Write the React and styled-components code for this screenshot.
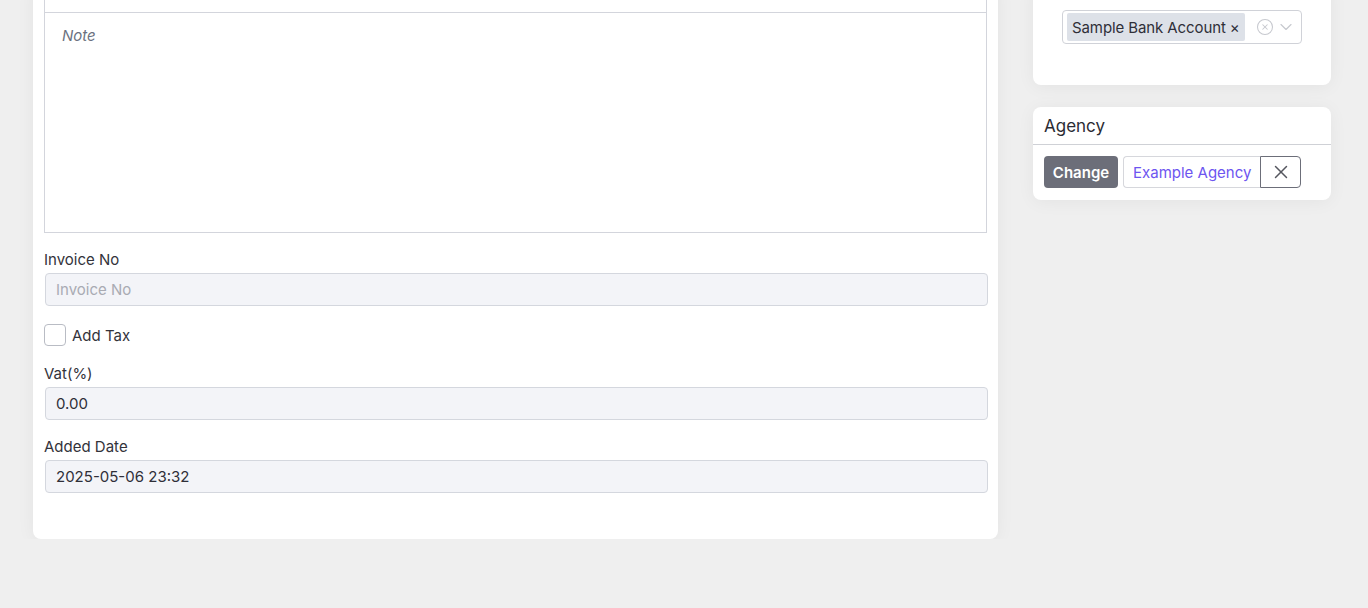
import React from 'react';
import styled, { createGlobalStyle } from 'styled-components';
import { X, CircleX, ChevronDown } from 'lucide-react';

const GlobalStyle = createGlobalStyle`
  body {
    margin: 0;
    background: #efefef;
    font-family: Inter, "Noto Sans", sans-serif;
    color: #2b2b33;
    overflow: hidden;
  }
`;

const Page = styled.div`
  display: flex;
  align-items: flex-start;
  gap: 35px;
  padding-left: 33px;
  margin-top: -20px;
`;

const Card = styled.div`
  background: #fff;
  border-radius: 8px;
  box-shadow: 0 2px 18px rgba(0, 0, 0, 0.05);
`;

const MainCard = styled(Card)`
  width: 965px;
  box-sizing: border-box;
  padding: 11px 10px 46px 11px;
`;

const Editor = styled.div`
  border: 1px solid #d3d5dc;
  width: 943px;
  box-sizing: border-box;
`;

const Toolbar = styled.div`
  height: 20px;
  border-bottom: 1px solid #d3d5dc;
`;

const NoteArea = styled.div`
  height: 219px;
  padding: 13px 17px;
  box-sizing: border-box;
  font-style: italic;
  font-size: 15px;
  color: #6b7280;
`;

const Label = styled.div`
  font-size: 15px;
  line-height: 22px;
  color: #33333b;
  margin-top: ${p => p.$top || 16}px;
  margin-bottom: 2px;
`;

const Input = styled.div`
  height: 33px;
  box-sizing: border-box;
  margin-left: 1px;
  border: 1px solid #d4d7de;
  border-radius: 4px;
  background: #f3f4f8;
  padding: 0 10px;
  display: flex;
  align-items: center;
  font-size: 15px;
  color: ${p => (p.$placeholder ? '#a9abb3' : '#2f2f38')};
`;

const CheckRow = styled.label`
  display: flex;
  align-items: center;
  gap: 6px;
  margin-top: 18px;
  font-size: 15px;
  color: #33333b;
`;

const Box = styled.span`
  width: 22px;
  height: 22px;
  box-sizing: border-box;
  border: 1px solid #b9bcc4;
  border-radius: 4px;
  background: #fff;
`;

const Side = styled.div`
  width: 298px;
  display: flex;
  flex-direction: column;
  gap: 22px;
`;

const BankCard = styled(Card)`
  padding: 30px 29px 41px 29px;
`;

const Select = styled.div`
  height: 34px;
  box-sizing: border-box;
  border: 1px solid #d0d2d8;
  border-radius: 4px;
  display: flex;
  align-items: center;
  padding: 0 4px;
  width: 240px;
`;

const Chip = styled.span`
  height: 28px;
  display: flex;
  align-items: center;
  gap: 4px;
  padding: 0 5px;
  background: #dde1e8;
  border-radius: 2px;
  font-size: 15px;
  letter-spacing: -0.1px;
  color: #2f2f38;
  white-space: nowrap;
`;

const SelectIcons = styled.div`
  margin-left: auto;
  display: flex;
  align-items: center;
  gap: 2px;
  color: #c7c9cf;
  padding-right: 1px;
`;

const Header = styled.div`
  height: 37px;
  border-bottom: 1px solid #cfd1d6;
  padding-left: 11px;
  display: flex;
  align-items: center;
  font-size: 17px;
  color: #2b2b33;
`;

const Body = styled.div`
  display: flex;
  align-items: center;
  padding: 11px 11px 12px 11px;
`;

const ChangeButton = styled.button`
  height: 32px;
  width: 74px;
  border: none;
  border-radius: 4px;
  background: #6c6e79;
  color: #fff;
  font-family: inherit;
  font-weight: 600;
  font-size: 15px;
  margin-right: 5px;
`;

const AgencyName = styled.span`
  height: 32px;
  box-sizing: border-box;
  display: flex;
  align-items: center;
  padding: 0 9px;
  border: 1px solid #d6d7dc;
  border-right: none;
  border-radius: 4px 0 0 4px;
  font-size: 15px;
  color: #6d55f0;
`;

const ClearButton = styled.span`
  height: 32px;
  width: 41px;
  box-sizing: border-box;
  display: flex;
  align-items: center;
  justify-content: center;
  border: 1px solid #6c6e79;
  border-radius: 0 4px 4px 0;
  color: #55565f;
`;

export default function App() {
  return (
    <>
      <GlobalStyle />
      <Page>
        <MainCard>
          <Editor>
            <Toolbar />
            <NoteArea>Note</NoteArea>
          </Editor>
          <Label>Invoice No</Label>
          <Input $placeholder>Invoice No</Input>
          <CheckRow>
            <Box />
            Add Tax
          </CheckRow>
          <Label $top={17}>Vat(%)</Label>
          <Input>0.00</Input>
          <Label>Added Date</Label>
          <Input>2025-05-06 23:32</Input>
        </MainCard>
        <Side>
          <BankCard>
            <Select>
              <Chip>
                Sample Bank Account <span>×</span>
              </Chip>
              <SelectIcons>
                <CircleX size={18} strokeWidth={1.4} />
                <ChevronDown size={20} strokeWidth={1.4} />
              </SelectIcons>
            </Select>
          </BankCard>
          <Card>
            <Header>Agency</Header>
            <Body>
              <ChangeButton>Change</ChangeButton>
              <AgencyName>Example Agency</AgencyName>
              <ClearButton>
                <X size={22} strokeWidth={1.6} />
              </ClearButton>
            </Body>
          </Card>
        </Side>
      </Page>
    </>
  );
}
